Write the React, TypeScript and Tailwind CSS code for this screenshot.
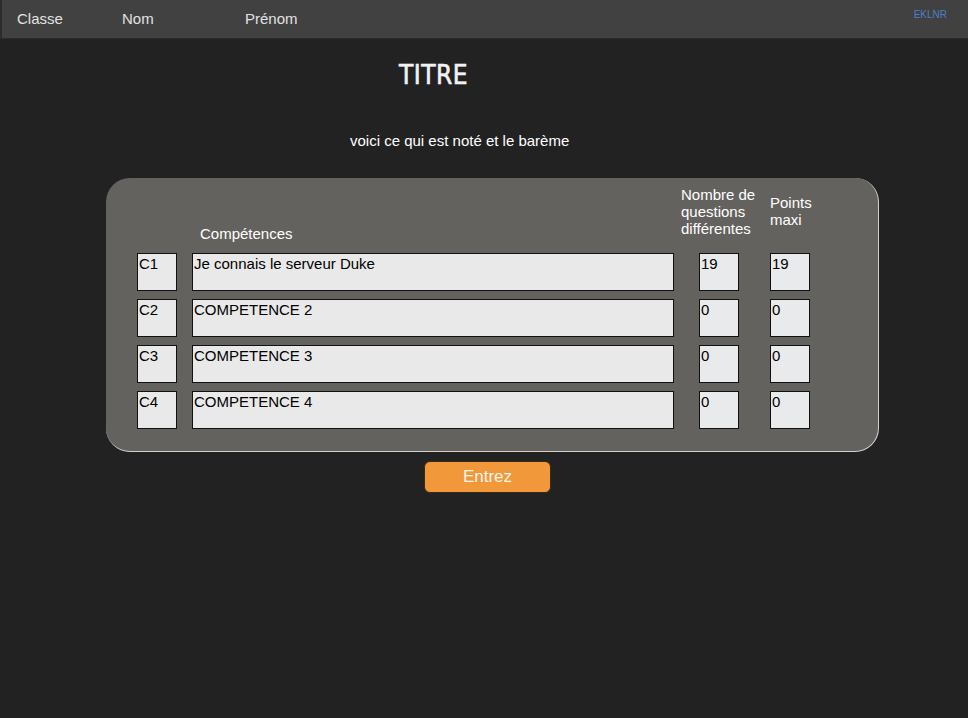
const rows = [
  { code: 'C1', label: 'Je connais le serveur Duke', questions: '19', points: '19' },
  { code: 'C2', label: 'COMPETENCE 2', questions: '0', points: '0' },
  { code: 'C3', label: 'COMPETENCE 3', questions: '0', points: '0' },
  { code: 'C4', label: 'COMPETENCE 4', questions: '0', points: '0' },
];

const font = { fontFamily: '"Liberation Sans", Arial, sans-serif' };

function Field({ value, width, tint }: { value: string; width: string; tint?: boolean }) {
  return (
    <div
      className={`${width} h-[38px] border-[1.5px] border-[#111] pl-[1px] pt-[1px] text-[15px] leading-[17px] text-black ${
        tint ? 'bg-[#e8eaec]' : 'bg-[#e9e9e9]'
      }`}
    >
      {value}
    </div>
  );
}

export default function App() {
  return (
    <div className="min-h-[718px] w-full bg-[#222222]" style={font}>
      <div className="flex h-[39px] items-center border-b border-l-2 border-[#2b2b2b] bg-[#414141] text-[15px] text-[#e2e2e2]">
        <span className="ml-[15px] w-[105px]">Classe</span>
        <span className="w-[123px]">Nom</span>
        <span>Prénom</span>
        <span className="ml-auto mr-[21px] -mt-[10px] text-[10px] text-[#4a80c8]">EKLNR</span>
      </div>

      <div
        className="ml-[399px] mt-[21px] h-[30px] text-[26px] leading-[30px] text-[#f2f2f2]"
        style={{
          fontFamily: '"Comic Sans MS", "DejaVu Sans Condensed", "DejaVu Sans", sans-serif',
          letterSpacing: '0.5px',
          WebkitTextStroke: '0.6px #f2f2f2',
        }}
      >
        TITRE
      </div>

      <div className="ml-[350px] mt-[41px] h-[20px] text-[15px] leading-[20px] text-white">
        voici ce qui est noté et le barème
      </div>

      <div className="ml-[106px] mt-[27px] h-[274px] w-[773px] rounded-[24px] border-b-[1.5px] border-r-[1.5px] border-[#d0d0d0] bg-[#64625e] pl-[31px]">
        <div className="flex h-[75px] text-[15px] text-white">
          <div className="w-[55px]" />
          <div className="w-[482px] pl-[8px] pt-[45px]">Compétences</div>
          <div className="ml-[7px] w-[89px] pt-[8px] leading-[17px]">
            Nombre de
            <br />
            questions
            <br />
            différentes
          </div>
          <div className="pt-[16px] leading-[17px]">
            Points
            <br />
            maxi
          </div>
        </div>
        <div className="flex flex-col gap-[8px]">
          {rows.map((r) => (
            <div key={r.code} className="flex">
              <Field value={r.code} width="w-[40px]" />
              <div className="w-[15px]" />
              <Field value={r.label} width="w-[482px]" />
              <div className="w-[25px]" />
              <Field value={r.questions} width="w-[40px]" tint />
              <div className="w-[31px]" />
              <Field value={r.points} width="w-[40px]" tint />
            </div>
          ))}
        </div>
      </div>

      <button className="ml-[424px] mt-[9px] flex h-[32px] w-[127px] items-center justify-center rounded-[6px] border border-[#3a2a1a] bg-[#f0983a] text-[17px] text-[#fdf6ea]">
        Entrez
      </button>
    </div>
  );
}
